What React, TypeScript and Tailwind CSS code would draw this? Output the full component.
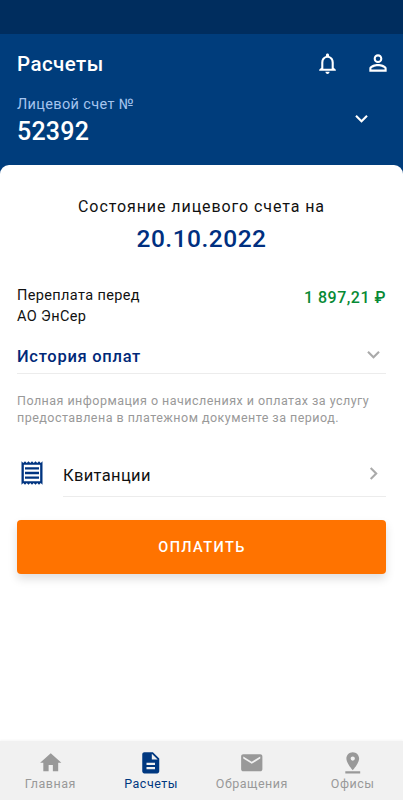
import {
  MdDescription,
  MdExpandMore,
  MdChevronRight,
  MdHome,
  MdMail,
  MdNotificationsNone,
  MdOutlineReceipt,
  MdPersonOutline,
  MdPinDrop,
} from "react-icons/md";

const tabs = [
  { label: "Главная", icon: MdHome, active: false },
  { label: "Расчеты", icon: MdDescription, active: true },
  { label: "Обращения", icon: MdMail, active: false },
  { label: "Офисы", icon: MdPinDrop, active: false },
];

export default function App() {
  return (
    <div className="flex h-[800px] w-full flex-col overflow-hidden bg-white font-['Roboto','Noto_Sans',sans-serif] text-[#111111]">
      {/* Status bar */}
      <div className="h-[33.5px] shrink-0 bg-[#002d5e]" />

      {/* Header */}
      <header className="h-[131px] shrink-0 bg-[#003d7c] text-white">
        <div className="flex h-[59px] items-center pl-[17px] pr-3">
          <h1 className="mt-[2px] flex-1 text-[20.5px] font-medium tracking-[0.45px]">Расчеты</h1>
          <MdNotificationsNone className="mr-[25px] size-[25px]" />
          <MdPersonOutline className="size-[26px]" />
        </div>
        <div className="flex items-start pl-[17px] pr-[29.5px]">
          <div className="flex-1">
            <p className="mt-[1px] text-[14.5px] leading-[22px] tracking-[0.35px] text-[#a5c4ee]">Лицевой счет №</p>
            <p className="mt-[1px] text-[25px] leading-[30px] font-medium tracking-[0.2px]">52392</p>
          </div>
          <MdExpandMore className="mt-[13.5px] size-[25px]" />
        </div>
      </header>

      {/* Account sheet */}
      <div className="flex flex-1 flex-col bg-[#003d7c]">
        <main className="flex-1 rounded-t-[9px] bg-white px-[17px] pt-[30px]">
          <h2 className="text-center text-[16px] leading-6 tracking-[0.92px]">Состояние лицевого счета на</h2>
          <p className="mt-[5px] text-center text-[24.5px] leading-[30px] font-medium tracking-[0.5px] text-[#002f80]">
            20.10.2022
          </p>

          <div className="mt-[31px] flex h-[42px] justify-between">
            <p className="text-[14.5px] leading-[21.5px] tracking-[0.37px]">
              Переплата перед
              <br />
              АО ЭнСер
            </p>
            <p className="mt-[2.5px] text-[16px] leading-[21px] font-medium tracking-[0.5px] text-[#078a35]">
              1 897,21 ₽
            </p>
          </div>

          <div className="mt-[10px] flex h-[37px] items-center justify-between border-b border-[#ececec]">
            <span className="mt-[6px] text-[16.5px] font-medium tracking-[0.72px] text-[#002878]">История оплат</span>
            <MdExpandMore className="size-[25px] text-[#aaaaaa]" />
          </div>

          <p className="mt-[18px] h-[34px] text-[12.5px] leading-[17px] tracking-[0.47px] whitespace-nowrap text-[#999999]">
            Полная информация о начислениях и оплатах за услугу
            <br />
            предоставлена в платежном документе за период.
          </p>

          <div className="mt-[24px] flex">
            <MdOutlineReceipt className="mt-[9px] ml-[0.5px] size-[28px] text-[#003480]" />
            <div className="ml-[17.5px] flex h-[47px] flex-1 items-center justify-between border-b border-[#ececec]">
              <span className="mt-[7px] text-[16.5px] tracking-[0.35px]">Квитанции</span>
              <MdChevronRight className="mt-[1px] size-[25px] text-[#aaaaaa]" />
            </div>
          </div>

          <button className="mt-[23px] h-[54px] w-full rounded-[4px] bg-[#ff7300] pt-[3px] pl-[1px] text-[14.5px] font-medium tracking-[1.4px] text-white shadow-[0_5px_10px_rgba(0,0,0,0.13)]">
            ОПЛАТИТЬ
          </button>
        </main>
      </div>

      {/* Bottom tabs */}
      <nav className="flex h-[59.5px] shrink-0 bg-[#f1f1f1] shadow-[0_-1px_2px_rgba(0,0,0,0.04)]">
        {tabs.map(({ label, icon: Icon, active }) => (
          <div
            key={label}
            className={`flex flex-1 flex-col items-center pt-[9px] ${active ? "text-[#003880]" : "text-[#999999]"}`}
          >
            <Icon className="size-[25.5px]" />
            <span className="mt-[1px] text-[12.5px] leading-4 tracking-[0.5px]">{label}</span>
          </div>
        ))}
      </nav>
    </div>
  );
}
